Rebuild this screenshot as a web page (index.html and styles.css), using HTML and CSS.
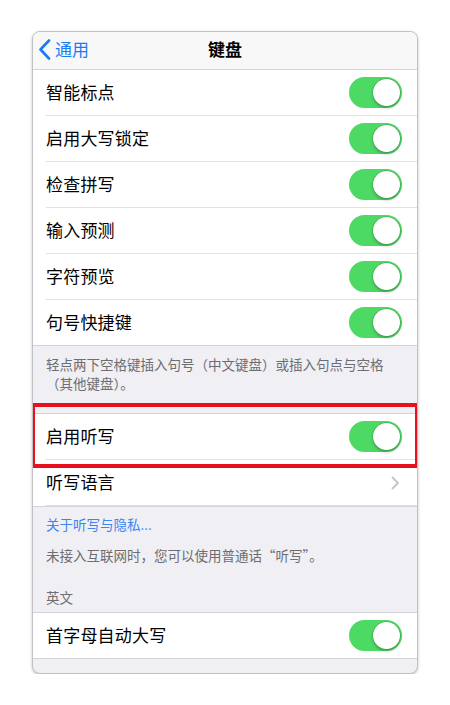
FILE: index.html
```html
<!DOCTYPE html>
<html lang="zh-CN">
<head>
<meta charset="utf-8">
<link rel="stylesheet" href="styles.css">
</head>
<body>
<div class="phone">
  <div class="nav">
    <div class="back">
      <svg class="chev" width="13" height="21" viewBox="0 0 13 21"><path d="M11 1.5 L2.5 10.5 L11 19.5" fill="none" stroke="#1a7cf5" stroke-width="2.6" stroke-linecap="round" stroke-linejoin="round"/></svg>
      <span>通用</span>
    </div>
    <div class="title">键盘</div>
  </div>

  <div class="group">
    <div class="row"><div class="inner"><span class="label">智能标点</span><span class="toggle"><span class="knob"></span></span></div></div>
    <div class="row"><div class="inner"><span class="label">启用大写锁定</span><span class="toggle"><span class="knob"></span></span></div></div>
    <div class="row"><div class="inner"><span class="label">检查拼写</span><span class="toggle"><span class="knob"></span></span></div></div>
    <div class="row"><div class="inner"><span class="label">输入预测</span><span class="toggle"><span class="knob"></span></span></div></div>
    <div class="row"><div class="inner"><span class="label">字符预览</span><span class="toggle"><span class="knob"></span></span></div></div>
    <div class="row"><div class="inner"><span class="label">句号快捷键</span><span class="toggle"><span class="knob"></span></span></div></div>
  </div>
  <div class="note first">轻点两下空格键插入句号（中文键盘）或插入句点与空格（其他键盘）。</div>

  <div class="group marked">
    <div class="row"><div class="inner"><span class="label">启用听写</span><span class="toggle"><span class="knob"></span></span></div></div>
    <div class="row"><div class="inner"><span class="label">听写语言</span>
      <svg class="disc" width="9" height="14" viewBox="0 0 9 14"><path d="M1.5 1.5 L7 7 L1.5 12.5" fill="none" stroke="#c4c4c9" stroke-width="1.8" stroke-linecap="round" stroke-linejoin="round"/></svg>
    </div></div>
    <div class="highlight"></div>
  </div>
  <div class="note link">关于听写与隐私...</div>
  <div class="note offline">未接入互联网时，您可以使用普通话“听写”。</div>
  <div class="note header">英文</div>

  <div class="group">
    <div class="row"><div class="inner"><span class="label">首字母自动大写</span><span class="toggle"><span class="knob"></span></span></div></div>
  </div>
  <div class="bottom"></div>
</div>
</body>
</html>
```

FILE: styles.css
```css
* { box-sizing: border-box; }
html, body { margin: 0; padding: 0; background: #fff; }
body {
  font-family: "Noto Sans CJK SC", "Noto Sans", sans-serif;
  color: #000;
}
.phone {
  margin: 31px 0 0 32px;
  width: 386px;
  border: 1px solid #c2c2c4;
  border-radius: 8px;
  background: #efeff4;
  box-shadow: 0 1px 3px rgba(0,0,0,0.25);
  overflow: hidden;
}
.nav {
  height: 38px;
  background: #f8f8f8;
  border-bottom: 1px solid #d4d4d6;
  display: grid;
  grid-template-columns: 1fr auto 1fr;
  align-items: center;
  padding: 0 5px 3px;
}
.back {
  display: flex;
  align-items: center;
  gap: 4px;
  color: #1a7cf5;
  font-size: 17px;
  line-height: 20px;
}
.chev { display: block; margin-top: 1px; }
.title {
  font-size: 17px;
  font-weight: 700;
  line-height: 20px;
}
.group {
  background: #fff;
  border-bottom: 1px solid #d4d4d8;
}
.group + .group, .note + .group { border-top: 1px solid #d4d4d8; }
.row {
  padding-left: 13px;
}
.inner {
  height: 46px;
  display: flex;
  align-items: center;
  justify-content: space-between;
  padding-right: 15px;
  border-bottom: 1px solid #e2e2e5;
}
.row:last-of-type .inner { border-bottom: none; height: 45px; }
.label {
  font-size: 17px;
  line-height: 20px;
  letter-spacing: 0.2px;
  margin-top: -2px;
}
.toggle {
  position: relative;
  width: 53px;
  height: 31px;
  border-radius: 16px;
  background: #4cd964;
  flex: none;
}
.knob {
  position: absolute;
  top: 2px;
  right: 2px;
  width: 27px;
  height: 27px;
  border-radius: 50%;
  background: #fff;
  box-shadow: 0 0 0 0.5px rgba(60,140,60,0.6), 0 2px 3px rgba(0,0,0,0.25);
}
.disc { display: block; margin-right: 2px; }
.note {
  font-size: 13.5px;
  line-height: 19px;
  color: #6d6d72;
  padding: 0 26px 0 13px;
}
.note.first { padding-top: 9px; padding-bottom: 20px; }
.note.link { color: #3a86f2; padding-top: 8px; }
.note.offline { padding-top: 12px; }
.note.header { padding-top: 23px; padding-bottom: 5px; }
.marked { position: relative; }
.highlight {
  position: absolute;
  left: -1px;
  right: -1px;
  top: -11px;
  height: 65px;
  border: 3px solid #e8101c;
  border-top-width: 4px;
  border-bottom-width: 4px;
  pointer-events: none;
}
.bottom { height: 14px; }
```
